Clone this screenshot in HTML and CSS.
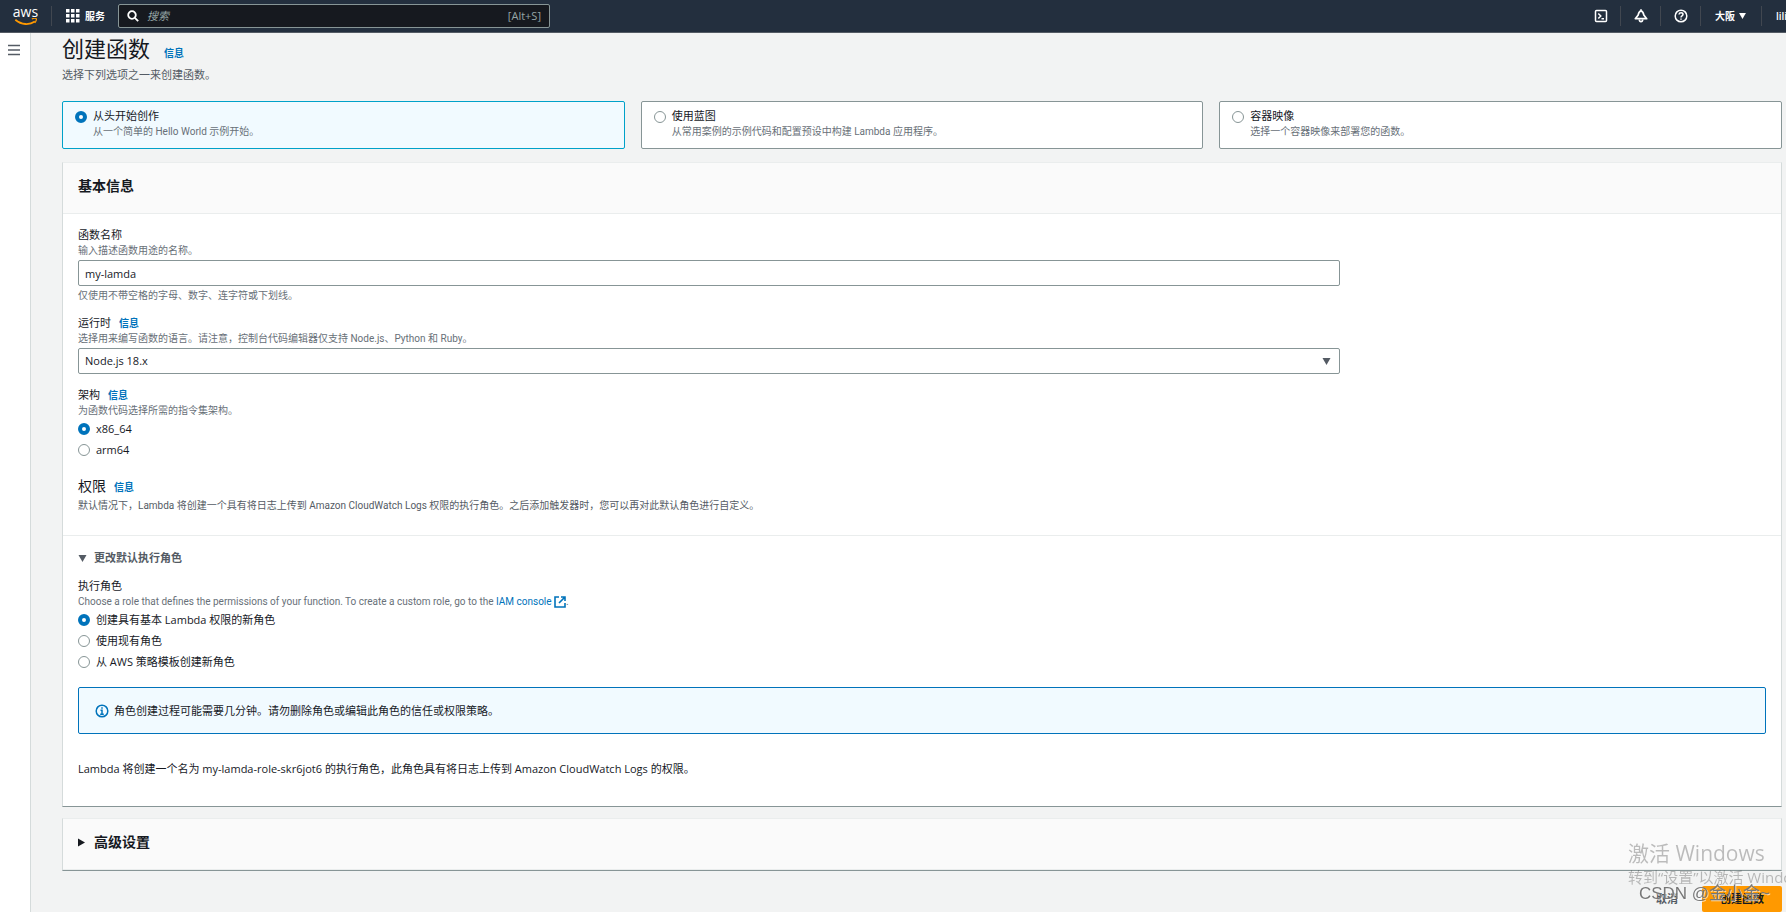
FILE: index.html
```html
<!DOCTYPE html>
<html lang="zh-CN">
<head>
<meta charset="utf-8">
<title>创建函数 - Lambda</title>
<link rel="stylesheet" href="styles.css">
</head>
<body>
<header class="topbar">
  <a class="logo" href="#" aria-label="aws">
    <span class="logo-word">aws</span>
    <svg class="logo-smile" viewBox="0 0 26 9" aria-hidden="true"><path d="M1 2c7 6 16 6 22 2" fill="none" stroke="#f90" stroke-width="2"/><path d="M19.500 1.200c2-1 4.500-1 5-.4s0 3-1.700 4.700" fill="none" stroke="#f90" stroke-width="1.400"/></svg>
  </a>
  <button class="services" type="button">
    <svg class="grid-icon" viewBox="0 0 14 14" fill="currentColor" aria-hidden="true"><path d="M0 0h3.500v3.500H0zM5 0h3.500v3.500H5zM10 0h3.500v3.500H10zM0 5h3.500v3.500H0zM5 5h3.500v3.500H5zM10 5h3.500v3.500H10zM0 10h3.500v3.500H0zM5 10h3.500v3.500H5zM10 10h3.500v3.500H10z"/></svg>
    <span>服务</span>
  </button>
  <label class="search">
    <svg class="search-icon" viewBox="0 0 12 12" fill="none" stroke="currentColor" stroke-width="1.800" aria-hidden="true"><circle cx="5" cy="5" r="3.800"/><path d="M7.800 7.800l3.400 3.400"/></svg>
    <input class="search-input" type="text" placeholder="搜索" aria-label="搜索">
    <span class="search-hint">[Alt+S]</span>
  </label>
  <nav class="tools">
    <button class="tool" type="button" aria-label="CloudShell"><svg class="tool-icon" viewBox="0 0 14 14" fill="none" stroke="currentColor" stroke-width="1.500" aria-hidden="true"><rect x="1.500" y="1.500" width="11" height="11" rx="1"/><path d="M4.300 4.500L6.800 7 4.300 9.500M7.500 9.700h2.500"/></svg></button>
    <button class="tool" type="button" aria-label="通知"><svg class="tool-icon" viewBox="0 0 14 14" fill="none" stroke="currentColor" stroke-width="1.700" stroke-linejoin="round" aria-hidden="true"><path d="M7 1.800C4.800 2.200 4.500 4.500 4.200 6L1.300 9.700h11.400L9.800 6C9.500 4.500 9.200 2.200 7 1.800z"/><path d="M5.300 10.500c.2 3 3.200 3 3.400 0M7 .3v1.500"/></svg></button>
    <button class="tool" type="button" aria-label="帮助"><svg class="tool-icon" viewBox="0 0 14 14" fill="none" stroke="currentColor" stroke-width="1.500" aria-hidden="true"><circle cx="7" cy="7" r="5.800"/><path d="M5 5.500C5.200 3.300 9 3.300 9 5.500 9 7 7 6.800 7 8.400M7 9.500v1.300"/></svg></button>
    <button class="tool region" type="button">大阪 <svg class="caret" viewBox="0 0 8 7" aria-hidden="true"><path d="M0 0h8L4 7z" fill="currentColor"/></svg></button>
    <button class="tool account" type="button">lili</button>
  </nav>
</header>
<div class="shell">
  <aside class="rail">
    <button class="menu" type="button" aria-label="打开导航"><svg class="menu-icon" viewBox="0 0 12 12" stroke="currentColor" stroke-width="1.500" aria-hidden="true"><path d="M0 1.500h12M0 6h12M0 10.500h12"/></svg></button>
  </aside>
  <main class="page">
    <div class="title-row"><h1 class="title">创建函数</h1><a class="info" href="#">信息</a></div>
    <p class="lead">选择下列选项之一来创建函数。</p>

    <div class="tiles">
      <label class="tile tile-on"><input class="radio" type="radio" name="method" checked><span class="tile-text"><span class="tile-name">从头开始创作</span><span class="hint">从一个简单的 Hello World 示例开始。</span></span></label>
      <label class="tile"><input class="radio" type="radio" name="method"><span class="tile-text"><span class="tile-name">使用蓝图</span><span class="hint">从常用案例的示例代码和配置预设中构建 Lambda 应用程序。</span></span></label>
      <label class="tile"><input class="radio" type="radio" name="method"><span class="tile-text"><span class="tile-name">容器映像</span><span class="hint">选择一个容器映像来部署您的函数。</span></span></label>
    </div>

    <section class="card">
      <div class="card-head"><h2 class="card-title">基本信息</h2></div>
      <div class="card-body">
        <div class="field">
          <label class="label" for="fn-name">函数名称</label>
          <span class="hint">输入描述函数用途的名称。</span>
          <input class="box" id="fn-name" type="text" value="my-lamda">
          <span class="hint">仅使用不带空格的字母、数字、连字符或下划线。</span>
        </div>
        <div class="field">
          <span class="label-row"><label class="label" for="runtime">运行时</label><a class="info" href="#">信息</a></span>
          <span class="hint">选择用来编写函数的语言。请注意，控制台代码编辑器仅支持 Node.js、Python 和 Ruby。</span>
          <span class="select-wrap">
            <select class="box" id="runtime"><option>Node.js 18.x</option></select>
            <svg class="select-caret" viewBox="0 0 8 7" aria-hidden="true"><path d="M0 0h8L4 7z" fill="currentColor"/></svg>
          </span>
        </div>
        <div class="field" role="radiogroup" aria-label="架构">
          <span class="label-row"><span class="label">架构</span><a class="info" href="#">信息</a></span>
          <span class="hint">为函数代码选择所需的指令集架构。</span>
          <div class="options">
            <label class="option"><input class="radio" type="radio" name="arch" checked>x86_64</label>
            <label class="option"><input class="radio" type="radio" name="arch">arm64</label>
          </div>
        </div>
        <div class="perm">
          <div class="label-row"><h3 class="perm-title">权限</h3><a class="info" href="#">信息</a></div>
          <p class="hint hint-dark">默认情况下，Lambda 将创建一个具有将日志上传到 Amazon CloudWatch Logs 权限的执行角色。之后添加触发器时，您可以再对此默认角色进行自定义。</p>
        </div>
      </div>
      <div class="role">
        <button class="toggle" type="button" aria-expanded="true"><svg class="caret" viewBox="0 0 8 7" aria-hidden="true"><path d="M0 0h8L4 7z" fill="currentColor"/></svg>更改默认执行角色</button>
        <div class="role-group" role="radiogroup" aria-label="执行角色">
          <span class="label">执行角色</span>
          <span class="hint">Choose a role that defines the permissions of your function. To create a custom role, go to the <a class="link" href="#">IAM console <svg class="ext-icon" viewBox="0 0 12 12" fill="none" stroke="currentColor" stroke-width="1.600" aria-hidden="true"><path d="M5 1H1v10h10V7M7 1h4v4M11 1L5 7"/></svg></a>.</span>
          <div class="options">
            <label class="option"><input class="radio" type="radio" name="role" checked>创建具有基本 Lambda 权限的新角色</label>
            <label class="option"><input class="radio" type="radio" name="role">使用现有角色</label>
            <label class="option"><input class="radio" type="radio" name="role">从 AWS 策略模板创建新角色</label>
          </div>
        </div>
        <div class="alert"><svg class="alert-icon" viewBox="0 0 14 14" fill="none" stroke="currentColor" stroke-width="1.500" aria-hidden="true"><circle cx="7" cy="7" r="5.800"/><path d="M7 3.200v1.500M5.500 6.200H7v4M5.200 10.200h3.600"/></svg><span>角色创建过程可能需要几分钟。请勿删除角色或编辑此角色的信任或权限策略。</span></div>
        <p class="summary">Lambda 将创建一个名为 my-lamda-role-skr6jot6 的执行角色，此角色具有将日志上传到 Amazon CloudWatch Logs 的权限。</p>
      </div>
    </section>

    <section class="card advanced">
      <button class="card-head advanced-head" type="button" aria-expanded="false"><svg class="caret-right" viewBox="0 0 7 8" aria-hidden="true"><path d="M0 0v8l7-4z" fill="currentColor"/></svg><span class="card-title">高级设置</span></button>
    </section>

    <div class="actions">
      <button class="btn" type="button">取消</button>
      <button class="btn btn-primary" type="button">创建函数</button>
    </div>
  </main>
</div>
<div class="activation"><div class="activation-title">激活 Windows</div><div class="activation-sub">转到“设置”以激活 Windows。</div></div>
<div class="credit">CSDN @金小金~</div>
</body>
</html>
```

FILE: styles.css
```css
* { box-sizing: border-box; }
html, body { height: 100%; }
body {
  margin: 0;
  display: flex;
  flex-direction: column;
  overflow: hidden;
  background: #f2f3f3;
  color: #16191f;
  font: 11px/16px "Open Sans", "Noto Sans CJK SC", sans-serif;
}
button, input, select { font: inherit; color: inherit; }
button { padding: 0; border: 0; background: none; cursor: pointer; }
h1, h2, h3, p { margin: 0; }
a { color: #0073bb; text-decoration: none; }
svg { display: block; flex: none; }

.topbar {
  flex: none;
  height: 33px;
  display: flex;
  align-items: center;
  background: #232f3e;
  border-bottom: 1px solid #545b64;
  color: #fff;
}
.logo {
  display: flex;
  flex-direction: column;
  align-items: center;
  width: 52px;
  height: 20px;
  border-right: 1px solid #414750;
  color: #fff;
}
.logo-word { font-size: 14px; line-height: 12px; }
.logo-smile { width: 24px; height: 8px; }
.services { display: flex; align-items: center; gap: 5px; padding: 0 13px 0 14px; color: #fff; font-size: 10px; font-weight: 600; }
.grid-icon { width: 14px; height: 14px; }
.search {
  display: flex;
  align-items: center;
  gap: 8px;
  width: 432px;
  height: 24px;
  padding: 0 8px;
  border: 1px solid #879596;
  border-radius: 2px;
  background: #16191f;
}
.search-icon { width: 12px; height: 12px; }
.search-input { flex: 1; min-width: 0; padding: 0; border: 0; outline: 0; background: none; color: #fff; }
.search-input::placeholder { color: #95a5a6; font-style: italic; opacity: 1; }
.search-hint { color: #95a5a6; }
.tools { display: flex; align-items: center; margin-left: auto; }
.tool { display: flex; align-items: center; height: 20px; padding: 0 12px 0 13px; border-right: 1px solid #414750; color: #fff; white-space: nowrap; }
.tool-icon { width: 14px; height: 14px; }
.region { gap: 4px; padding: 0 15px 0 14px; font-size: 10px; font-weight: 600; }
.region .caret { width: 7px; height: 6px; }
.account { width: 24px; padding: 0 0 0 14px; border: 0; overflow: hidden; font-size: 10px; font-weight: 600; }

.shell { flex: 1; display: flex; min-height: 0; }
.rail { flex: none; width: 31px; background: #fff; border-right: 1px solid #d5dbdb; }
.menu { display: block; padding: 11px 8px; color: #545b64; }
.menu-icon { width: 12px; height: 12px; }
.page { flex: 1; min-width: 0; padding: 1px 4px 0 31px; }

.title-row { display: flex; align-items: baseline; gap: 14px; height: 33px; }
.title { font-size: 22px; line-height: 28px; font-weight: 400; }
.info { font-size: 10px; line-height: 16px; font-weight: 700; }
.lead { margin-bottom: 18px; color: #545b64; }

.tiles { display: grid; grid-template-columns: repeat(3, 1fr); gap: 16px; margin-bottom: 13px; }
.tile { display: flex; gap: 6px; height: 48px; padding: 6px 12px; border: 1px solid #879596; border-radius: 2px; background: #fff; }
.tile-on { border-color: #00a1c9; background: #f1faff; }
.tile .radio { margin-top: 3px; }
.tile-text { display: flex; flex-direction: column; }
.tile-name { line-height: 16px; }
.hint { color: #687078; font: 10px/15px Roboto, "Noto Sans CJK SC", sans-serif; }
.hint-dark { margin-top: 2px; color: #545b64; }

.radio {
  appearance: none;
  flex: none;
  width: 12px;
  height: 12px;
  margin: 0;
  border: 1px solid #879596;
  border-radius: 50%;
  background: #fff;
}
.radio:checked { border: 4px solid #0073bb; }

.card {
  margin-bottom: 11px;
  border: 1px solid #d5dbdb;
  border-top-color: #eaeded;
  border-bottom-color: #879596;
  background: #fff;
}
.card-head { height: 51px; padding: 12px 15px 16px; border-bottom: 1px solid #eaeded; background: #fafafa; }
.card-title { font-size: 14px; line-height: 22px; font-weight: 700; }
.card-body { padding: 13px 15px 22px; }
.field { display: flex; flex-direction: column; width: calc(75% - 4px); margin-bottom: 12px; }
.label-row { display: flex; align-items: baseline; gap: 8px; }
.label { line-height: 16px; }
.box {
  display: block;
  width: 100%;
  height: 26px;
  margin: 2px 0;
  padding: 0 6px;
  border: 1px solid #879596;
  border-radius: 2px;
  background: #fff;
}
select.box { margin-bottom: 1px; appearance: none; }
.select-wrap { position: relative; }
.select-caret { position: absolute; right: 9px; bottom: 10px; width: 9px; height: 7px; color: #545b64; pointer-events: none; }
.options { display: flex; flex-direction: column; gap: 5px; margin-top: 3px; }
.option { display: flex; align-items: center; gap: 6px; line-height: 16px; }
.perm { margin-top: 18px; }
.perm-title { font-size: 14px; line-height: 20px; font-weight: 400; }

.role { padding: 14px 15px 29px; border-top: 1px solid #eaeded; }
.toggle { display: flex; align-items: center; gap: 7px; margin-bottom: 12px; color: #545b64; font-weight: 700; }
.caret { width: 9px; height: 7px; }
.role-group { display: flex; flex-direction: column; }
.link { white-space: nowrap; }
.ext-icon { display: inline-block; width: 12px; height: 12px; vertical-align: middle; }
.alert { display: flex; align-items: center; gap: 5px; height: 47px; margin: 17px 0 27px; padding: 0 16px; border: 1px solid #0073bb; border-radius: 2px; background: #f1faff; }
.alert-icon { width: 14px; height: 14px; color: #0073bb; }

.advanced-head { display: flex; align-items: center; gap: 9px; width: 100%; }
.caret-right { width: 7px; height: 9px; }

.actions { display: flex; justify-content: flex-end; gap: 6px; margin-top: 15px; }
.btn { height: 26px; padding: 0 18px; border-radius: 2px; color: #545b64; font-weight: 700; }
.btn-primary { background: #f90; color: #16191f; }

.activation { position: fixed; right: 0; bottom: 24px; width: 158px; overflow: hidden; color: #000; opacity: 0.25; white-space: nowrap; pointer-events: none; }
.activation-title { font-size: 21px; line-height: 26px; }
.activation-sub { font-size: 15px; line-height: 22px; }
.credit { position: fixed; right: 16px; bottom: 7px; color: #777; font: 17px/22px "Liberation Sans", "Noto Sans CJK SC", sans-serif; text-shadow: 1px 1px 0 #ffffff99; pointer-events: none; }
```
